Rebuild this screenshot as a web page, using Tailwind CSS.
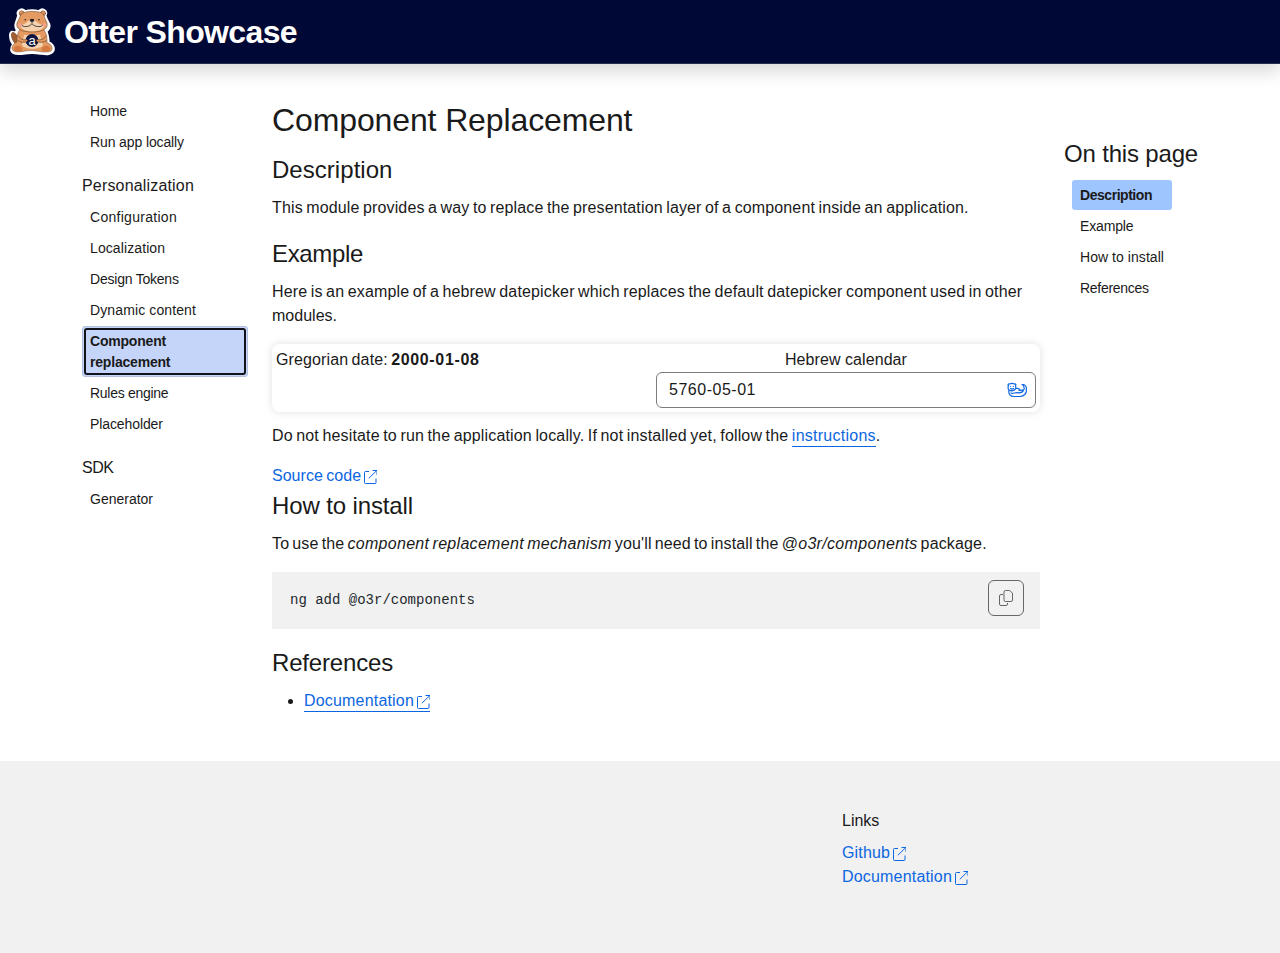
<!DOCTYPE html>
<html lang="en">
<head>
<meta charset="utf-8">
<title>Otter Showcase</title>
<script src="https://cdn.jsdelivr.net/npm/@tailwindcss/browser@4"></script>
</head>
<body class="flex h-[953px] flex-col overflow-hidden bg-white font-['Liberation_Sans',Arial,sans-serif] text-base text-[#1a1a1a]">
<svg class="hidden">
  <symbol id="ext" viewBox="0 0 14 14"><path fill="none" stroke="currentColor" stroke-width="1" d="M5 1.500H1.500a1 1 0 0 0-1 1v10a1 1 0 0 0 1 1h9.500a1 1 0 0 0 1-1V8.500M4.800 8.300l8-7.800M8.500.5h4.500v4.500"/></symbol>
</svg>
<header class="z-10 flex h-16 shrink-0 items-center border-b border-[#262b50] bg-[#000835] shadow-[0_8px_16px_rgba(0,0,0,0.15)]">
  <svg class="ml-2 h-12 w-12" viewBox="8 8 48 48" stroke-linejoin="round" stroke-linecap="round">
    <path fill="#fff" stroke="#fff" stroke-width="2.500" d="M20 10c2-1 4 0 5 1.500 4-1.200 10-1.200 14 0C40 10 42 9 44 10c2.500 1.200 2.500 4 1 5.500 1 3 2 5 4 8.500 1 3.500-1 6-3 7.500 2 3 2 7 2.500 11 3 1 5.500 4 5 7.500-1.500 5-8 4-13 3.500-6-1-11-1-17 0-5 .6-11 1-12-3-.3-2.500.5-4.500 2-6-2-2.500-3.500-5.500-3.200-10 .3-3 2.500-3 3.700-1.500 1.500-1 3-2 3.500-3C15 28.500 15.500 25 16 23c1-3 2-5 2.500-8C17 13.500 18 11 20 10z"/>
    <path fill="#a45f31" stroke="#5d3822" stroke-width=".6" d="M19 47c-4-3-7-6.500-7.500-11-.2-3.500 1-4.500 3-3 3 2 4.500 6 6.500 11z"/>
    <path fill="#e59a61" stroke="#533723" stroke-width=".4" d="M21 28c-3.500 4-4.500 9-4 14-4 1.500-6 5-4.500 8 2 3 8 2 13 1 5-.7 9-.6 14 .5 5 .7 11 1.500 12.500-2 .7-3.500-2-6-5-7 .3-5-.5-10-4.500-14.500z"/>
    <path fill="#f6d3ae" d="M24 35h16l3 10c-3 5-18 5-21 0z"/>
    <g fill="#e59a61" stroke="#533723" stroke-width=".5"><circle cx="21.700" cy="13.300" r="2.500"/><circle cx="43" cy="13.300" r="2.500"/>
    <path d="M21 14c3.500-3.500 19-3.500 22.500 0 1 3.500 2 6 3.500 9 1.500 6-5 9-15 9s-16.500-3-15-9c1.500-3 3-5.500 4-9z"/></g>
    <path fill="#f6d3ae" d="M20 26c2-1.500 6-2 8-5 2-1.800 6-1.800 8 0 2 3 6 3.500 8.500 5-2 4-7 5.300-12.500 5.300S22 30 20 26z"/>
    <path fill="none" stroke="#333" stroke-width=".9" d="M21 24.500c1.500 3 8 3 11-.8 3 3.800 10 3.800 11.500.8M32 20.500V23"/>
    <ellipse cx="32" cy="20.300" rx="2.300" ry="1.500" fill="#1c1c24"/>
    <circle cx="25.300" cy="19.800" r=".8" fill="#222"/><circle cx="39" cy="19.800" r=".8" fill="#222"/>
    <circle cx="19.800" cy="25" r="2" fill="#f3a28c"/><circle cx="44.500" cy="25" r="2" fill="#f3a28c"/>
    <circle cx="32" cy="40.500" r="6.500" fill="#10163f"/>
    <text x="32" y="44.800" text-anchor="middle" fill="#fff" font-family="Liberation Sans" font-size="13">a</text>
    <path fill="#e59a61" stroke="#533723" stroke-width=".6" d="M18.500 36c1 3 5 4.500 8 3.500 1.500 0 1.500 2 0 2.300-3 1-6.500.5-8.500-1.300M46 36c-1.500 3-5.500 4.500-8.500 3.500-1.500 0-1.500 2 0 2.300 3 1 7 .5 9-1.300"/>
    <path fill="#d4793f" d="M14 50c-1-4 5-6 8-2 1 2 0 3-2 3.200-3 .4-5 .3-6-1.200zM50 50c1-4-5-6-8-2-1 2 0 3 2 3.200 3 .4 5 .3 6-1.200z"/>
  </svg>
  <div class="ml-2 text-[32px] leading-[40px] font-bold tracking-[-0.633px] text-white">Otter Showcase</div>
</header>

<div class="flex h-[697px] shrink-0">
  <nav class="ml-[82px] w-[166px] shrink-0 pt-8 text-sm leading-[21px]">
    <ul class="flex flex-col gap-px">
      <li class="px-2 py-[4.5px] tracking-[-0.086px]">Home</li>
      <li class="px-2 py-[4.5px] tracking-[-0.115px]">Run app locally</li>
    </ul>
    <h6 class="mt-[17px] mb-1 text-base leading-6 tracking-[0.173px]">Personalization</h6>
    <ul class="flex flex-col gap-px">
      <li class="px-2 py-[4.5px] tracking-[0.287px]">Configuration</li>
      <li class="px-2 py-[4.5px] tracking-[0.1px]">Localization</li>
      <li class="px-2 py-[4.5px] tracking-[-0.22px]">Design Tokens</li>
      <li class="px-2 py-[4.5px] tracking-[0.115px]">Dynamic content</li>
      <li class="rounded-[3px] border border-[#b4c0dc] bg-[#c5d5f9] p-px font-bold tracking-[-0.2px]"><div class="rounded-[3px] border-2 border-[#111318] px-1 py-[0.5px]">Component<br>replacement</div></li>
      <li class="px-2 py-[4.5px] tracking-[-0.28px]">Rules engine</li>
      <li class="px-2 py-[4.5px] tracking-[-0.1px]">Placeholder</li>
    </ul>
    <h6 class="mt-[17px] mb-1 text-base leading-6 tracking-[-0.5px]">SDK</h6>
    <ul><li class="px-2 py-[4.5px]">Generator</li></ul>
  </nav>

  <main class="ml-6 w-[768px] shrink-0 pt-[37px]">
    <h1 class="h-[38px] text-[32px] leading-[38px] tracking-[-0.12px]">Component Replacement</h1>
    <h2 class="mt-4 mb-3 text-2xl leading-[29px] tracking-[0.04px]">Description</h2>
    <p class="tracking-[0.135px] [word-spacing:-1.1px]">This module provides a way to replace the presentation layer of a component inside an application.</p>
    <h2 class="mt-[19px] mb-3 text-2xl leading-[29px] tracking-[-0.339px]">Example</h2>
    <p class="tracking-[0.15px] whitespace-nowrap [word-spacing:-1.1px]">Here is an example of a hebrew datepicker which replaces the default datepicker component used in other<br><span class="tracking-[0.01px]">modules.</span></p>
    <div class="mt-4 grid h-[68px] grid-cols-2 rounded-lg p-1 shadow-[0_0_8px_rgba(0,0,0,0.13)]">
      <div class="tracking-[0.12px] [word-spacing:-1.2px]">Gregorian date: <b class="tracking-[0.65px]">2000-01-08</b></div>
      <div>
        <div class="text-center tracking-[0.07px]">Hebrew calendar</div>
        <div class="flex h-9 items-center justify-between rounded-md border border-[#7c7c7c] pr-[7px] pl-3">
          <span class="tracking-[0.516px]">5760-05-01</span>
          <svg class="h-[16px] w-[21px]" viewBox="0 0 21 16" fill="none" stroke="#0c66e1" stroke-width="1.200" stroke-linecap="round">
            <path d="M1.500 3.500C.5 2.500 1.500 1.200 2.600 2.100 4 1.300 6 1.300 7.300 2.100c1.200-.8 2 .5 1.200 1.500.8 2.300.3 3.500-1.200 4.500C5.500 9 3.500 9 2 8 1 7 .8 5.300 1.500 3.500zM2 8c-.8 3.500 1 6.500 5 6.500h6c4-.3 6.500-3 6.500-7 0-3-1.500-5-4-5 1.500 1.500 2 3 1.500 5"/>
            <path d="M3.500 4.500h.1M6.300 4.500h.1M3.500 6.500c1 .7 2 .7 3 0M9 6.500c1.500-.5 2.500 0 3.500.8M4 11c2 1 4-.5 6-.3 3 .5 5.500.3 6.500-2.700M12 8.500c1.500-1 2.500 0 3.500-.5"/>
          </svg>
        </div>
      </div>
    </div>
    <p class="mt-3 tracking-[0.155px] [word-spacing:-1.1px]">Do not hesitate to run the application locally. If not installed yet, follow the <a class="border-b border-[#0c66e1] pb-[2px] tracking-[0.257px] text-[#0c66e1]">instructions</a>.</p>
    <p class="mt-4 flex items-center text-[#0c66e1]"><span class="tracking-[0.02px] [word-spacing:-1px]">Source code</span><svg class="mt-[2px] ml-[3px] h-3.5 w-[13px]" viewBox="0 0 13 14"><use href="#ext" width="14" height="14"/></svg></p>
    <h2 class="mt-[3px] mb-3 text-2xl leading-[29px] tracking-[-0.123px]">How to install</h2>
    <p class="tracking-[0.15px] [word-spacing:-1.5px]">To use the <i class="tracking-[0.3px]">component replacement mechanism</i> you'll need to install the <i class="tracking-[0.33px]">@o3r/components</i> package.</p>
    <div class="mt-4 flex h-[57px] items-start justify-between bg-[#f1f1f1] pt-2 pr-4 pl-[18px]">
      <code class="pt-[10px] font-['Liberation_Mono',monospace] text-sm leading-[21px] text-[#24292e]">ng add @o3r/components</code>
      <button class="flex size-9 items-center justify-center rounded-md border border-[#666]"><svg class="size-4" viewBox="0 0 16 16" fill="none" stroke="#666"><path d="M7.500.5h4L14.500 3v7a1.500 1.500 0 0 1-1.500 1.500H7.500A1.500 1.500 0 0 1 6 10V2A1.500 1.500 0 0 1 7.500.5zM5 4.500H3A1.500 1.500 0 0 0 1.500 6v8A1.500 1.500 0 0 0 3 15.500h5A1.500 1.500 0 0 0 9.500 14v-1"/></svg></button>
    </div>
    <h2 class="mt-[19px] mb-3 text-2xl leading-[29px] tracking-[-0.173px]">References</h2>
    <ul class="list-disc pl-8"><li class="h-6"><a class="border-b border-[#0c66e1] pb-[2px] text-[#0c66e1]"><span class="tracking-[0.183px]">Documentation</span><svg class="ml-[3px] inline-block h-3.5 w-[13px] align-[-3px]" viewBox="0 0 13 14"><use href="#ext" width="14" height="14"/></svg></a></li></ul>
  </main>

  <aside class="ml-6 pt-[75px]">
    <h2 class="text-2xl leading-[29px] tracking-[-0.174px]">On this page</h2>
    <ul class="mt-3 ml-2 flex w-[100px] flex-col gap-px text-sm leading-[21px]">
      <li class="rounded-[3px] bg-[#9ec5fe] px-2 py-[4.5px] font-bold tracking-[-0.456px]">Description</li>
      <li class="px-2 py-[4.5px] tracking-[-0.15px]">Example</li>
      <li class="px-2 py-[4.5px] tracking-[0.053px] whitespace-nowrap">How to install</li>
      <li class="px-2 py-[4.5px] tracking-[-0.28px]">References</li>
    </ul>
  </aside>
</div>

<footer class="flex-1 bg-[#f1f1f1] pt-12 pl-[842px]">
  <h6 class="mb-2">Links</h6>
  <div class="flex items-center text-[#0c66e1]"><span class="tracking-[0.15px]">Github</span><svg class="mt-[2px] ml-[3px] h-3.5 w-[13px]" viewBox="0 0 13 14"><use href="#ext" width="14" height="14"/></svg></div>
  <div class="flex items-center text-[#0c66e1]"><span class="tracking-[0.183px]">Documentation</span><svg class="mt-[2px] ml-[3px] h-3.5 w-[13px]" viewBox="0 0 13 14"><use href="#ext" width="14" height="14"/></svg></div>
</footer>
</body>
</html>
